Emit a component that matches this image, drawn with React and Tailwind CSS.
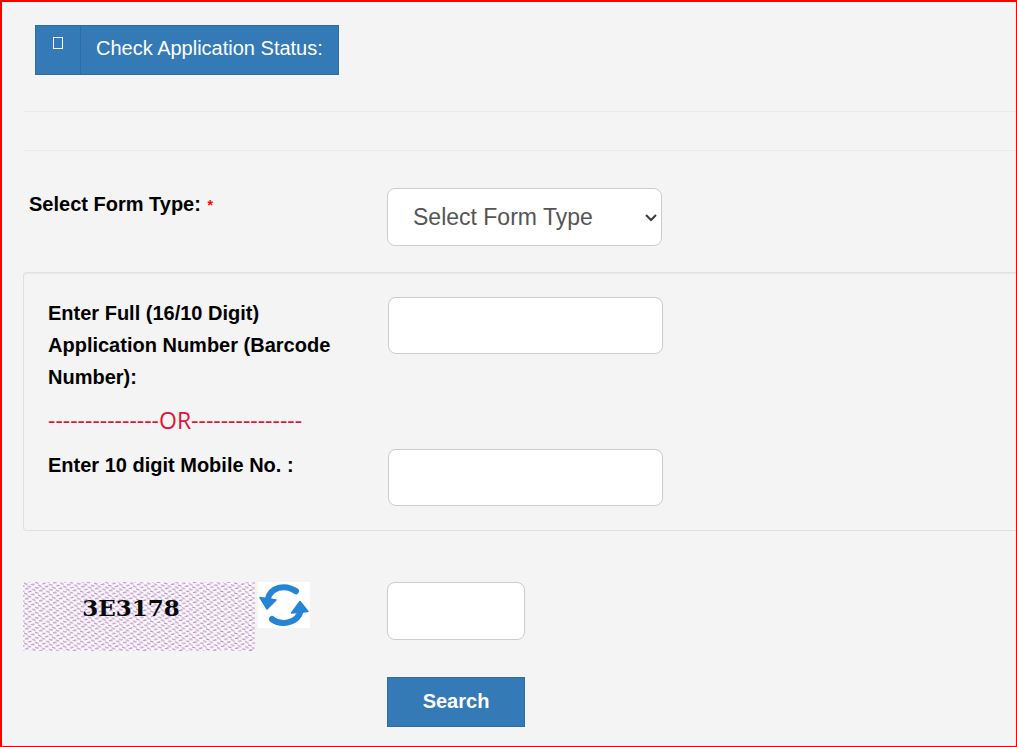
import React from "react";

const labelText = "text-[20px] leading-8 font-bold text-black";
const field =
  "rounded-lg border border-[#cccccc] bg-white px-[25px] text-[23px] text-[#555555]";

function TitleBar() {
  return (
    <div className="ml-3 flex h-[50px] w-fit border border-[#2e6da4] bg-[#337ab7] text-white">
      <div className="flex w-[45px] justify-center border-r border-[#2e6da4] pt-[11px]">
        <svg width="11" height="13" viewBox="0 0 11 13" aria-hidden="true">
          <rect x="0.5" y="0.5" width="9" height="11" fill="none" stroke="currentColor" />
        </svg>
      </div>
      <h1 className="px-[15px] text-[20px] leading-[44px]">Check Application Status:</h1>
    </div>
  );
}

function Captcha() {
  return (
    <svg width="232" height="69" viewBox="0 0 232 69" role="img" aria-label="Captcha 3E3178">
      <defs>
        <pattern id="weave" width="14" height="10" patternUnits="userSpaceOnUse" patternTransform="skewY(8)">
          <rect width="14" height="10" fill="#fdf9ff" />
          <g strokeWidth="1.2" fill="none">
            <path
              d="M1 1 L4.500 1.800 M8 1.800 L11.500 0.600 M2 6.800 L5.500 5.600 M9 6 L12.500 6.400"
              stroke="#ae86bb"
            />
            <path
              d="M5 3.300 L8 4.100 M0 4.100 L1.500 3.600 M12 3.300 L14 4.100 M5 9.200 L8.500 8.100 M12 8.400 L14 9 M0 9 L1.500 9.200"
              stroke="#b78fc2"
            />
          </g>
        </pattern>
      </defs>
      <rect width="232" height="69" fill="url(#weave)" />
      <text
        x="108"
        y="34"
        textAnchor="middle"
        fill="#0a0a0a"
        className="font-['DejaVu_Serif',serif] text-[23px] font-bold"
      >
        3E3178
      </text>
    </svg>
  );
}

function RefreshIcon() {
  return (
    <svg width="52" height="46" viewBox="0 0 52 46" aria-hidden="true">
      <g fill="none" stroke="#2484d6" strokeWidth="6">
        <path d="M9.500 18 C12 5 27 1.500 38.500 9.500" />
        <path d="M43 28 C40 41 24 44.500 13.500 37" />
        <path d="M37.500 9 L38 9.300 M14 37 L14.500 37.500" strokeLinecap="round" />
      </g>
      <g fill="#2484d6" stroke="#2484d6" strokeWidth="1.500" strokeLinejoin="round">
        <path d="M2 15.500 L18 18 L9 27 Z" />
        <path d="M42 19.500 L50 29.500 L33.500 31 Z" />
      </g>
    </svg>
  );
}

export default function App() {
  return (
    <main className="min-h-screen border-2 border-r border-b border-[#ff0000] bg-[#f4f4f4] pt-[23px] pb-[19px] pl-[21px] font-['Liberation_Sans',sans-serif]">
      <TitleBar />
      <hr className="mt-9 border-[#eaeaea]" />
      <hr className="mt-[38px] border-[#eaeaea]" />

      <form onSubmit={(e) => e.preventDefault()}>
        <div className="mt-[37px] flex items-start">
          <label htmlFor="form-type" className={`${labelText} w-[364px] shrink-0 pl-[6px]`}>
            Select Form Type:{" "}
            <span className="ml-px align-[1px] text-[14px] leading-none font-bold text-[#ff0000]">*</span>
          </label>
          <div className="relative w-[275px]">
            <select id="form-type" className={`${field} h-[58px] w-full appearance-none`}>
              <option>Select Form Type</option>
            </select>
            <svg
              className="pointer-events-none absolute top-[26px] right-[5px]"
              width="12"
              height="8"
              viewBox="0 0 12 8"
              aria-hidden="true"
            >
              <path d="M1 1 L6 6 L11 1" fill="none" stroke="#3c3c3c" strokeWidth="2" />
            </svg>
          </div>
        </div>

        <section className="mt-[26px] rounded-l border border-r-0 border-[#e0e0e0] pt-6 pb-6 pl-6 shadow-[inset_0_1px_1px_rgba(0,0,0,0.05)]">
          <div className="flex items-start">
            <label htmlFor="app-number" className={`${labelText} w-[340px] shrink-0 pr-12`}>
              Enter Full (16/10 Digit) Application Number (Barcode Number):
            </label>
            <input id="app-number" type="text" className={`${field} h-[57px] w-[275px]`} />
          </div>
          <p className="mt-[7px] mb-[9px] font-['Open_Sans',sans-serif] text-[23px] leading-10 text-[#dc143c]">
            ---------------OR---------------
          </p>
          <div className="flex items-start">
            <label htmlFor="mobile" className={`${labelText} w-[340px] shrink-0`}>
              Enter 10 digit Mobile No. :
            </label>
            <input id="mobile" type="text" className={`${field} h-[57px] w-[275px]`} />
          </div>
        </section>

        <div className="mt-[51px] flex items-start">
          <div className="flex w-[364px] shrink-0 items-start gap-[3px]">
            <Captcha />
            <button type="button" aria-label="Refresh captcha" className="bg-white">
              <RefreshIcon />
            </button>
          </div>
          <input type="text" aria-label="Captcha text" className={`${field} h-[58px] w-[138px]`} />
        </div>

        <button
          type="submit"
          className="mt-[26px] ml-[364px] block h-[50px] w-[138px] border border-[#2e6da4] bg-[#337ab7] pb-0.5 text-[20px] font-bold text-white"
        >
          Search
        </button>
      </form>
    </main>
  );
}
